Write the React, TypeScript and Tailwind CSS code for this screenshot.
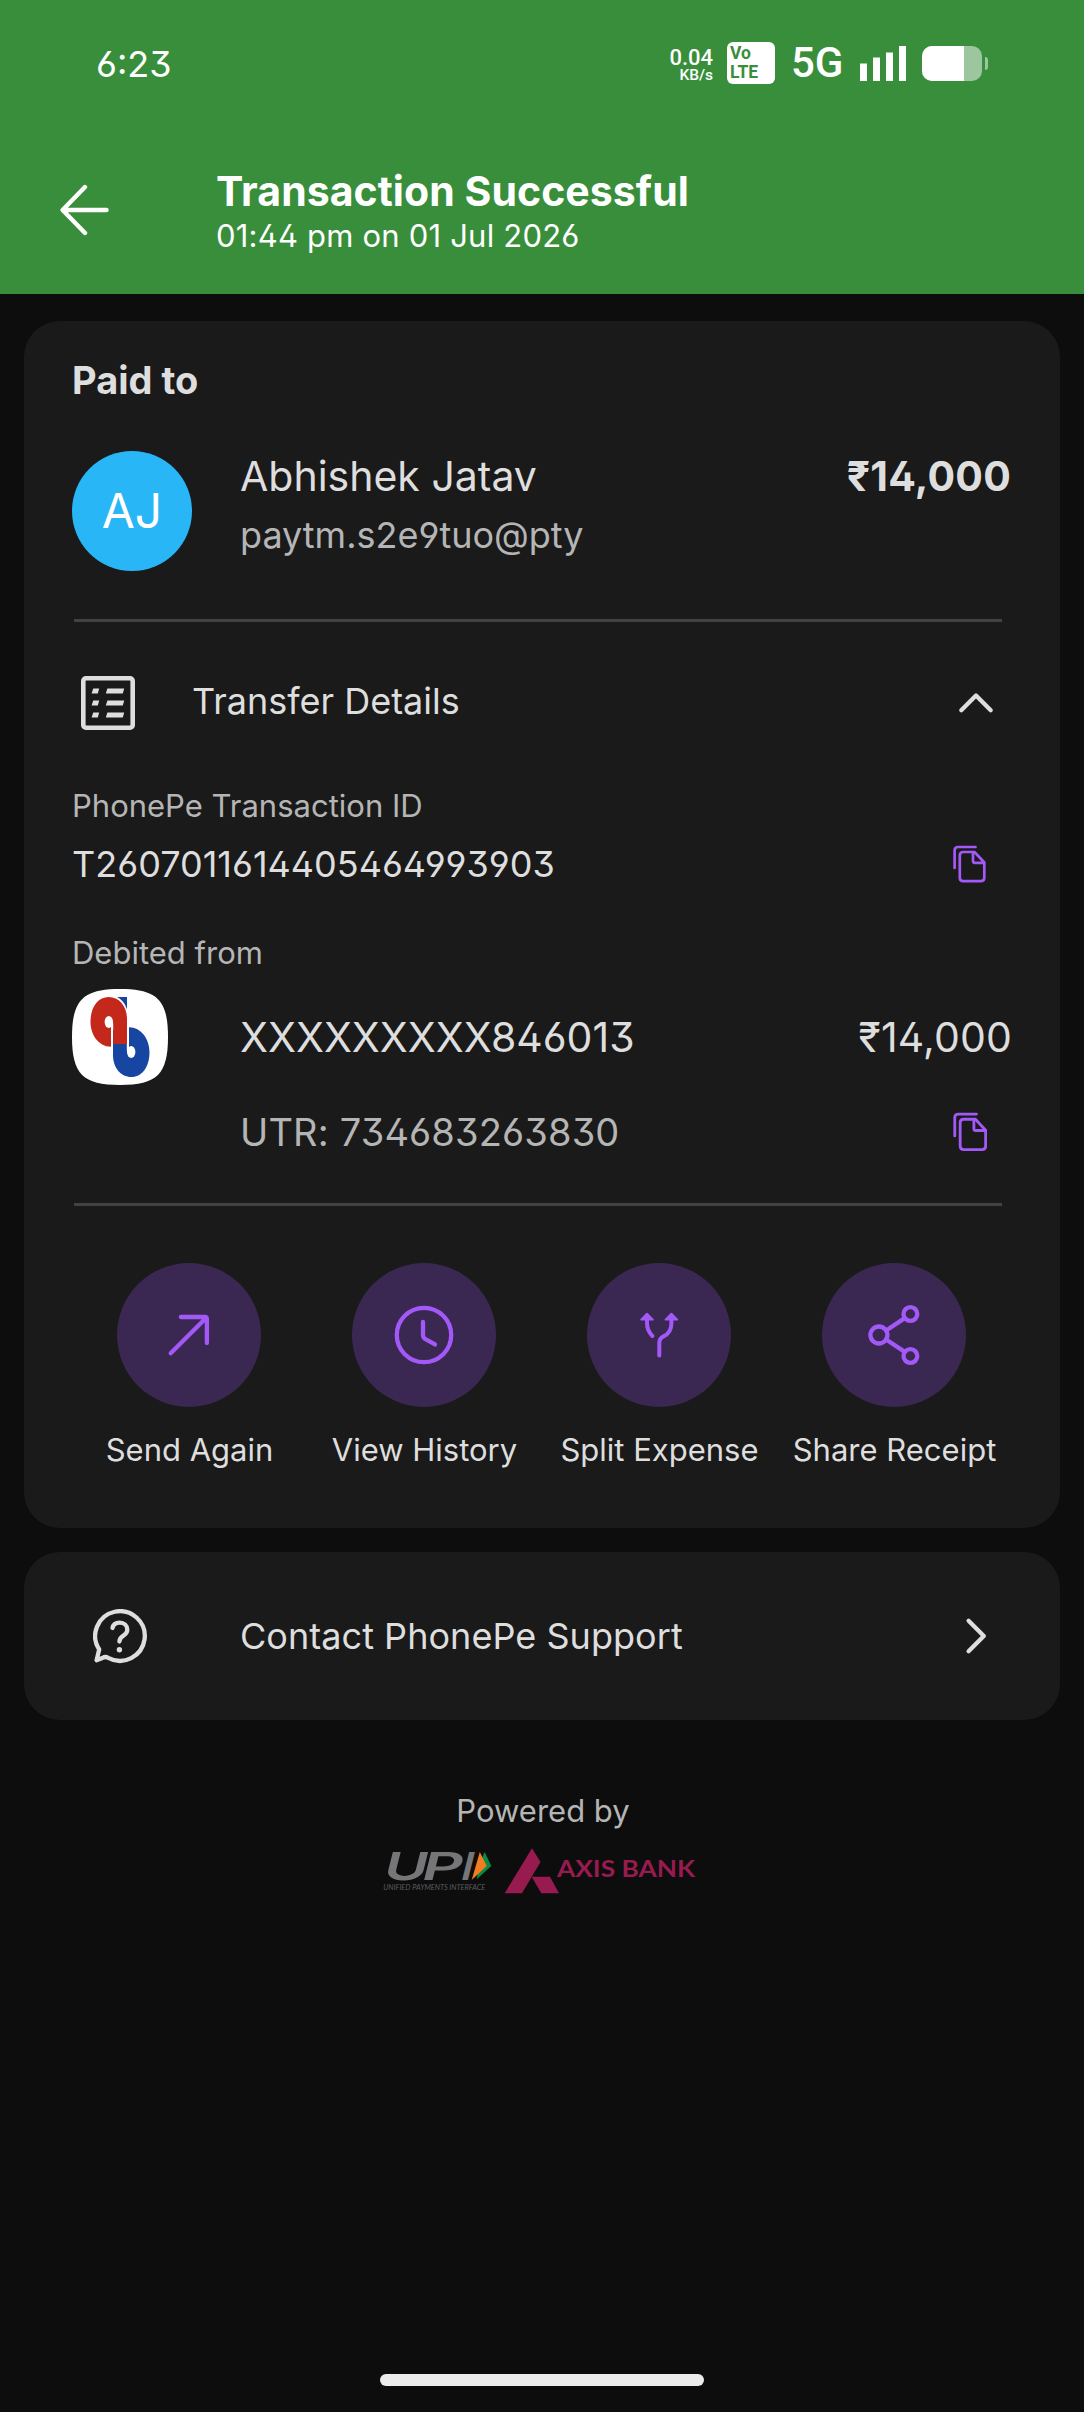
import React from "react";

interface IconProps {
  className?: string;
}

interface Action {
  label: string;
  icon: React.ReactNode;
}

const BackIcon: React.FC = () => (
  <svg width="50" height="52" viewBox="0 0 50 52" fill="none">
    <path
      d="M46.5 26H3M25 3L2.6 26L25 49"
      stroke="#fff"
      strokeWidth="4.4"
      strokeLinecap="round"
      strokeLinejoin="round"
    />
  </svg>
);

const SignalIcon: React.FC = () => (
  <svg width="46" height="35" viewBox="0 0 46 35" fill="#fff">
    <rect x="0" y="17.5" width="7" height="17.5" />
    <rect x="13" y="11.5" width="7" height="23.5" />
    <rect x="26" y="6.5" width="7" height="28.5" />
    <rect x="39" y="0" width="7" height="35" />
  </svg>
);

const ListIcon: React.FC = () => (
  <svg width="54" height="54" viewBox="0 0 54 54" fill="#dedede">
    <rect
      x="2.3"
      y="2.3"
      width="49.4"
      height="49.4"
      rx="2.6"
      fill="none"
      stroke="#dedede"
      strokeWidth="4.6"
    />
    <path d="M12.2 12.6H18.2L16.8 17.4H10.6ZM26.4 12.6H43.2L41.8 17.4H24.8Z" />
    <path d="M12.2 24.6H18.2L16.8 29.4H10.6ZM26.4 24.6H43.2L41.8 29.4H24.8Z" />
    <path d="M12.2 36.6H18.2L16.8 41.4H10.6ZM26.4 36.6H43.2L41.8 41.4H24.8Z" />
  </svg>
);

const CopyIcon: React.FC<IconProps> = ({ className }) => (
  <svg
    className={className}
    viewBox="0 0 33 38"
    fill="none"
    stroke="#a259f7"
    strokeWidth="2.7"
    strokeLinecap="round"
    strokeLinejoin="round"
  >
    <path d="M22.5 2H5Q1.6 2 1.6 5.4V23" />
    <path d="M10.2 7H21.5L31.3 17.5V32.8Q31.3 36.2 27.9 36.2H10.2Q6.8 36.2 6.8 32.8V10.4Q6.8 7 10.2 7Z" />
    <path d="M20 7.5V16Q20 17.8 21.8 17.8H31" />
  </svg>
);

const HelpIcon: React.FC = () => (
  <svg width="54" height="55" viewBox="0 0 54 55" fill="none">
    <path
      d="M3.6 51.2L6.2 40.5A24.8 24.8 0 1 1 15.2 48.8Q12.4 47.2 9.4 49Z"
      stroke="#dedede"
      strokeWidth="4.3"
      strokeLinejoin="round"
    />
    <path
      d="M19.5 19C20.2 15.6 23 13.6 26.6 13.6C31 13.6 34.3 16.6 34.3 20.8C34.3 27.6 26.4 25.6 26.4 32.6"
      stroke="#dedede"
      strokeWidth="4.3"
      strokeLinecap="round"
    />
    <circle cx="26.4" cy="40.8" r="2.7" fill="#dedede" />
  </svg>
);

const BankLogo: React.FC = () => (
  <svg width="96" height="96" viewBox="0 0 96 96">
    <path
      d="M0 48C0 11 11 0 48 0S96 11 96 48S85 96 48 96S0 85 0 48Z"
      fill="#fff"
    />
    <g transform="rotate(180 48 48)">
      <path
        d="M39.4 57.7C27 58 18.5 46 18.5 33C18.5 18 26 8 36.6 8C47 8 55 17 55 30V55H41.2V33Z"
        fill="#1746a2"
      />
      <ellipse cx="36.8" cy="33" rx="4.2" ry="6" fill="#fff" />
      <rect x="39" y="33" width="2" height="26" fill="#fff" />
    </g>
    <path
      d="M39.4 57.7C27 58 18.5 46 18.5 33C18.5 18 26 8 36.6 8C47 8 55 17 55 30V55H41.2V33Z"
      fill="#c4281b"
    />
    <ellipse cx="36.8" cy="33" rx="4.2" ry="6" fill="#fff" />
    <rect x="39" y="33" width="2" height="26" fill="#fff" />
    <path d="M45 8H55V20.5C53 14.5 50 10.5 45 8Z" fill="#1746a2" />
  </svg>
);

const PoweredLogos: React.FC = () => (
  <svg width="318" height="66" viewBox="0 -8 318 66">
    <g
      transform="translate(5.5 35) skewX(-14)"
      fill="#767678"
      fontFamily="Inter, sans-serif"
      fontWeight="600"
      fontSize="38.6"
    >
      <text x="-4" y="0" textLength="44" lengthAdjust="spacingAndGlyphs">
        U
      </text>
      <text x="34" y="0" textLength="41" lengthAdjust="spacingAndGlyphs">
        P
      </text>
      <text x="73.5" y="0" textLength="12" lengthAdjust="spacingAndGlyphs">
        I
      </text>
    </g>
    <polygon points="104.7,7 111.3,21 96.7,34.3 99,20" fill="#0b8a43" />
    <polygon points="99.8,7 106.7,21 91.7,35" fill="#f47b20" />
    <text
      x="3.3"
      y="45"
      fill="#5c5c5e"
      fontFamily="Lato, sans-serif"
      fontStyle="italic"
      fontSize="7.4"
      textLength="102"
      lengthAdjust="spacingAndGlyphs"
    >
      UNIFIED PAYMENTS INTERFACE
    </text>
    <polygon points="152,3.3 160.5,17 142,48.3 124.7,48.3" fill="#971b4f" />
    <polygon points="151.7,31.7 170,31.7 179,48.3 161.3,48.3" fill="#971b4f" />
    <text
      x="177"
      y="32"
      fill="#971b4f"
      fontFamily="Lato, sans-serif"
      fontWeight="700"
      fontSize="23.6"
      textLength="138"
      lengthAdjust="spacingAndGlyphs"
    >
      AXIS BANK
    </text>
  </svg>
);

const actions: Action[] = [
  {
    label: "Send Again",
    icon: <path d="M53.7 90.3L89 55M63.9 54H87.6Q89.9 54 89.9 56.3V80" />,
  },
  {
    label: "View History",
    icon: (
      <>
        <circle cx="72" cy="72" r="27.2" />
        <path d="M71 59V72Q71 74.6 73 75.8L83 81.4" />
      </>
    ),
  },
  {
    label: "Split Expense",
    icon: (
      <>
        <path
          d="M60 54V60C60 65.5 62.4 70 65.4 73M84.4 54V60.5C84.4 67.5 80.6 71.5 76.5 73.4Q72.3 75.4 72.3 80V92.5"
          strokeWidth="4"
        />
        <path
          d="M60 50.7L54.2 56.6H65.8ZM84.4 50.7L78.6 56.6H90.2Z"
          fill="#a259f7"
          strokeWidth="2"
        />
      </>
    ),
  },
  {
    label: "Share Receipt",
    icon: (
      <>
        <circle cx="56.9" cy="72" r="8.5" />
        <circle cx="88.4" cy="51" r="6.9" />
        <circle cx="88.4" cy="93" r="6.9" />
        <path d="M64.5 67.3L82 55.6M64.5 76.7L82 88.4" />
      </>
    ),
  },
];

const App: React.FC = () => {
  return (
    <div className="flex h-[2412px] w-[1084px] flex-col bg-[#0d0d0d] font-['Inter',sans-serif] text-[#dedede] [font-feature-settings:'cv02','cv03','cv04','cv09']">
      <header className="h-[294px] bg-[#398e3c] text-white">
        {/* Status bar */}
        <div className="flex h-[126px] items-center pr-24 pl-24">
          <span className="mt-0.5 text-[36px] leading-none">6:23</span>
          <div className="ml-auto flex items-center font-['Roboto',sans-serif]">
            <div className="mr-3.5 flex flex-col items-end pt-1 font-medium">
              <span className="text-[22px] leading-[19px]">0.04</span>
              <span className="text-[15.5px] leading-[16px]">KB/s</span>
            </div>
            <div className="flex h-[42px] w-12 flex-col rounded-md bg-white pt-[2px] pl-[3px] text-[17.5px] font-bold text-[#398e3c]">
              <span className="leading-[19px]">Vo</span>
              <span className="leading-[18px]">LTE</span>
            </div>
            <span className="ml-4 w-[69px] text-[42px] leading-none font-medium">
              5G
            </span>
            <SignalIcon />
            <div className="ml-4 flex h-[35px] w-[60px] overflow-hidden rounded-[10px] bg-white/50">
              <div className="w-[42px] bg-white" />
            </div>
            <div className="ml-[3px] h-[13px] w-[3px] rounded-r-full bg-white/50" />
          </div>
        </div>

        {/* App bar */}
        <div className="flex h-[168px] pl-[60px]">
          <div className="mt-[58px] w-[156px]">
            <BackIcon />
          </div>
          <div className="mt-[43px] flex flex-col">
            <h1 className="text-[41px] leading-[44px] font-bold tracking-[0.05px]">
              Transaction Successful
            </h1>
            <p className="text-[31px] leading-[45px] tracking-[0.2px]">
              01:44 pm on 01 Jul 2026
            </p>
          </div>
        </div>
      </header>

      <main className="flex flex-col gap-6 px-6 pt-[27px]">
        <section className="rounded-[36px] bg-[#1a1a1a] px-12 pt-[39px] pb-[60px]">
          <h2 className="text-[38px] leading-[40px] font-bold">Paid to</h2>

          <div className="mt-[51px] flex">
            <div className="flex size-[120px] items-center justify-center rounded-full bg-[#29b6f6] text-[48px] text-white">
              AJ
            </div>
            <div className="ml-12 flex flex-col">
              <span className="text-[41px] leading-[50px]">Abhishek Jatav</span>
              <span className="text-[36px] leading-[68px] text-[#b5b5b5]">
                paytm.s2e9tuo@pty
              </span>
            </div>
            <span className="mr-px ml-auto text-[41px] leading-[50px] font-bold tracking-[0.2px]">
              ₹14,000
            </span>
          </div>

          <div className="mt-12 mr-2.5 ml-0.5 h-[3px] bg-[#424242]" />

          <div className="mt-[51px] flex h-14 items-center pr-[17px] pl-[9px]">
            <div className="mt-1">
              <ListIcon />
            </div>
            <span className="ml-[57px] text-[36px] leading-none">
              Transfer Details
            </span>
            <svg
              className="mt-[3px] ml-auto"
              width="38"
              height="24"
              viewBox="0 0 38 24"
              fill="none"
            >
              <path
                d="M4.3 19.2L19 4.5L33.7 19.2"
                stroke="#dedede"
                strokeWidth="4.3"
                strokeLinecap="round"
                strokeLinejoin="round"
              />
            </svg>
          </div>

          <p className="mt-[59px] text-[31px] leading-[36px] text-[#b5b5b5]">
            PhonePe Transaction ID
          </p>
          <div className="mt-4 flex h-12 items-center justify-between pr-[26px]">
            <span className="text-[36px] leading-none">
              T2607011614405464993903
            </span>
            <CopyIcon className="h-[38px] w-[33px]" />
          </div>

          <p className="mt-[47px] text-[31px] leading-[36px] text-[#b5b5b5]">
            Debited from
          </p>
          <div className="mt-[18px] flex items-center">
            <BankLogo />
            <span className="mt-0.5 ml-[72px] text-[41px]">
              XXXXXXXXX846013
            </span>
            <span className="mt-0.5 ml-auto text-[41px] tracking-[0.15px]">
              ₹14,000
            </span>
          </div>
          <div className="mt-[23px] flex h-12 items-center justify-between pr-[25px] pl-[168px]">
            <span className="text-[38px] leading-none tracking-[0.15px] text-[#b5b5b5]">
              UTR: 734683263830
            </span>
            <CopyIcon className="h-[39.5px] w-[34.5px]" />
          </div>

          <div className="mt-[47px] mr-2.5 ml-0.5 h-[3px] bg-[#424242]" />

          <div className="mt-[57px] grid grid-cols-4">
            {actions.map((action) => (
              <div key={action.label} className="flex flex-col items-center">
                <div className="mr-[2px] size-[144px] rounded-full bg-[#3a2852]">
                  <svg
                    viewBox="0 0 144 144"
                    fill="none"
                    stroke="#a259f7"
                    strokeWidth="4.3"
                    strokeLinecap="round"
                    strokeLinejoin="round"
                  >
                    {action.icon}
                  </svg>
                </div>
                <span className="mt-[25px] text-[31px] leading-[36px] whitespace-nowrap">
                  {action.label}
                </span>
              </div>
            ))}
          </div>
        </section>

        <section className="flex h-[168px] items-center rounded-[36px] bg-[#1a1a1a] pr-[72px] pl-[69px]">
          <HelpIcon />
          <span className="ml-[93px] text-[36px] leading-none tracking-[0.04px]">
            Contact PhonePe Support
          </span>
          <svg
            className="ml-auto"
            width="24"
            height="38"
            viewBox="0 0 24 38"
            fill="none"
          >
            <path
              d="M4.6 3.8L19.8 19L4.6 34.2"
              stroke="#dedede"
              strokeWidth="4.3"
              strokeLinecap="round"
              strokeLinejoin="round"
            />
          </svg>
        </section>
      </main>

      <footer className="mt-[73px] flex grow flex-col items-center pb-[26px]">
        <p className="ml-0.5 text-[31px] leading-[36px] text-[#b5b5b5]">
          Powered by
        </p>
        <div className="mt-2 mr-1.5">
          <PoweredLogos />
        </div>
        <div className="mt-auto h-3 w-[324px] rounded-full bg-[#ececec]" />
      </footer>
    </div>
  );
};

export default App;
